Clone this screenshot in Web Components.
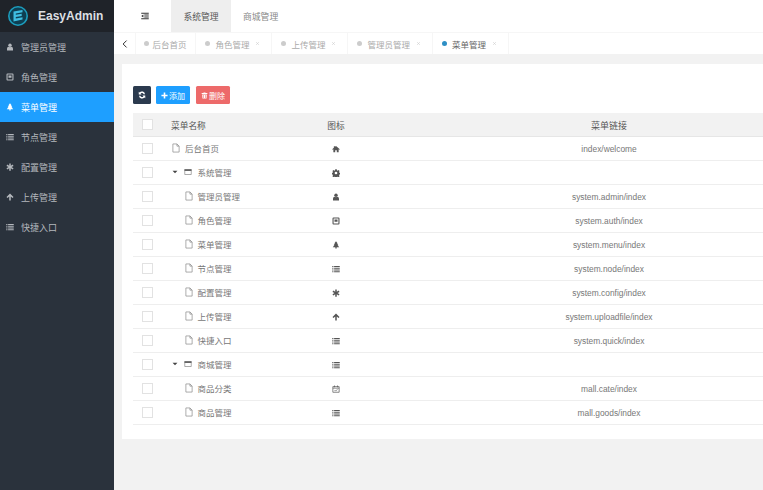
<!DOCTYPE html>
<html lang="zh"><head><meta charset="utf-8">
<style>
html,body{margin:0;padding:0;height:100%;overflow:hidden;background:#f2f2f2;}
body{font:9px "Liberation Sans","Noto Sans CJK SC",sans-serif;color:#666;}
</style></head><body>
<ea-app>
  <ea-sidebar slot="side">
    <ea-nav-item icon="user">管理员管理</ea-nav-item>
    <ea-nav-item icon="role">角色管理</ea-nav-item>
    <ea-nav-item icon="tree" active>菜单管理</ea-nav-item>
    <ea-nav-item icon="list">节点管理</ea-nav-item>
    <ea-nav-item icon="asterisk">配置管理</ea-nav-item>
    <ea-nav-item icon="up">上传管理</ea-nav-item>
    <ea-nav-item icon="list">快捷入口</ea-nav-item>
  </ea-sidebar>
  <ea-topbar slot="top"></ea-topbar>
  <ea-tabs slot="top">
    <ea-tab fixed>后台首页</ea-tab>
    <ea-tab>角色管理</ea-tab>
    <ea-tab>上传管理</ea-tab>
    <ea-tab>管理员管理</ea-tab>
    <ea-tab active>菜单管理</ea-tab>
  </ea-tabs>
  <ea-card>
    <ea-toolbar></ea-toolbar>
    <ea-table>
      <ea-row head name="菜单名称" icon-text="图标" link="菜单链接"></ea-row>
      <ea-row level="0" name="后台首页" icon="home" link="index/welcome"></ea-row>
      <ea-row level="0" folder name="系统管理" icon="cog"></ea-row>
      <ea-row level="1" name="管理员管理" icon="user" link="system.admin/index"></ea-row>
      <ea-row level="1" name="角色管理" icon="role" link="system.auth/index"></ea-row>
      <ea-row level="1" name="菜单管理" icon="tree" link="system.menu/index"></ea-row>
      <ea-row level="1" name="节点管理" icon="list" link="system.node/index"></ea-row>
      <ea-row level="1" name="配置管理" icon="asterisk" link="system.config/index"></ea-row>
      <ea-row level="1" name="上传管理" icon="up" link="system.uploadfile/index"></ea-row>
      <ea-row level="1" name="快捷入口" icon="list" link="system.quick/index"></ea-row>
      <ea-row level="0" folder name="商城管理" icon="list"></ea-row>
      <ea-row level="1" name="商品分类" icon="calendar" link="mall.cate/index"></ea-row>
      <ea-row level="1" name="商品管理" icon="list" link="mall.goods/index"></ea-row>
    </ea-table>
  </ea-card>
</ea-app>
<script>
const PATHS={
 user:'<circle cx="8" cy="4.6" r="3.4"/><path d="M2 14.800v-2.800c0-2.600 1.500-4.200 3.300-4.300.7.600 1.700 1 2.700 1s2-.4 2.700-1c1.800.1 3.300 1.700 3.300 4.300v2.800z"/>',
 role:'<path fill-rule="evenodd" d="M3 1h10a2 2 0 0 1 2 2v10a2 2 0 0 1-2 2H3a2 2 0 0 1-2-2V3a2 2 0 0 1 2-2zM3.200 3.200v9.600h9.600V3.200z"/><path d="M5 5h6v4.500H5z"/>',
 tree:'<path d="M8 .5l3.500 4.300H9.900l3 3.600h-1.700l3.300 4H9.300V15H6.700v-2.600H1.500l3.300-4H3.100l3-3.600H4.500z"/>',
 list:'<path d="M.5 1.800h2.400v2.300H.5zM4.200 1.800h11.300v2.300H4.200zM.5 5.300h2.400v2.300H.5zM4.200 5.300h11.300v2.300H4.200zM.5 8.800h2.400v2.300H.5zM4.200 8.800h11.300v2.300H4.200zM.5 12.300h2.400v2.300H.5zM4.200 12.300h11.300v2.300H4.200z"/>',
 asterisk:'<path d="M6.500.8h3v4.700l4-2.300 1.500 2.600L11 8.100l4 2.300-1.500 2.600-4-2.300v4.700h-3v-4.700l-4 2.300L1 10.400l4-2.300-4-2.300 1.500-2.600 4 2.300z"/>',
 up:'<path d="M8 1.200l7 7-2 2-3.500-3.400V15h-3V6.800L3 10.200l-2-2z"/>',
 home:'<path d="M8 1.800l7.600 6.500-1 1.100L13.300 8.300V14.500H9.600v-4H6.400v4H2.700V8.300L1.400 9.400l-1-1.100L3.700 5.500V2.500h2.200v1.200z"/>',
 cog:'<path fill-rule="evenodd" d="M6.500.6h3l.4 2.100 1.400.6 1.800-1.200 2.100 2.100-1.200 1.800.6 1.400 2 .4v3l-2 .4-.6 1.400 1.200 1.800-2.100 2.100-1.800-1.200-1.400.6-.4 2h-3l-.4-2-1.400-.6-1.800 1.200-2.100-2.100 1.200-1.800-.6-1.400-2-.4v-3l2-.4.6-1.400-1.200-1.800L3 2.100l1.800 1.200 1.400-.6zM8 5.300a2.700 2.700 0 1 0 0 5.400 2.700 2.700 0 0 0 0-5.400z"/>',
 calendar:'<path fill="none" stroke="currentColor" stroke-width="1.400" d="M1.700 3.200h12.600v11.300H1.700zM1.700 6.300h12.600M5 1v3.500M11 1v3.500"/><path fill="none" stroke="currentColor" stroke-width="1.400" d="M5.200 10.200l2 2 3.600-3.600"/>',
 refresh:'<path d="M14 6.600h-2.700A3.600 3.600 0 0 0 5.300 5.100l1.900 1.900H1.500V1.300l1.700 1.700A6.200 6.200 0 0 1 14 6.600zM2 9.400h2.700a3.600 3.600 0 0 0 6 1.500L8.800 9h5.700v5.700l-1.700-1.700A6.200 6.200 0 0 1 2 9.400z"/>',
 plus:'<path d="M6.200 1h3.600v5.200H15v3.600H9.800V15H6.200V9.800H1V6.200h5.200z"/>',
 trash:'<path d="M6 1h4l.6 1.500H14.500v2h-13v-2h3.900zM2.700 5.500h10.600l-.7 9.500H3.400zM5.500 7v6.500h1.200V7zm3.800 0v6.500h1.200V7z"/>',
 outdent:'<path d="M.5 1.500h15v2H.5zM6.500 5.200h9v2h-9zM6.500 8.900h9v2h-9zM.5 12.500h15v2H.5zM4.800 5v6L.5 8z"/>',
 back:'<path d="M10.500 2.500L5 8l5.500 5.500" fill="none" stroke="currentColor" stroke-width="1.600"/>',
 file:'<path fill="none" stroke="currentColor" stroke-width="1.100" d="M3 1.500h6.500L13 5v9.500H3zM9.500 1.500V5H13"/>',
 win:'<path d="M1 2.500h14v3.500H1z"/><path fill="none" stroke="currentColor" stroke-width="1.100" d="M1.500 3h13v10h-13z"/>',
 caret:'<path d="M1.500 4.500h13L8 11.500z"/>',
 x:'<path d="M3.500 3.500l9 9M12.500 3.500l-9 9" fill="none" stroke="currentColor" stroke-width="1.800"/>'
};
function def(name,css,html){
  customElements.define(name,class extends HTMLElement{
    connectedCallback(){
      if(this.shadowRoot)return;
      const r=this.attachShadow({mode:'open'});
      r.innerHTML='<style>'+css+'</style>'+(typeof html==='function'?html(this):html);
    }
  });
}
def('ea-icon',':host{display:inline-flex;flex:none;width:var(--s,9px);height:var(--s,9px);color:inherit}svg{width:100%;height:100%;fill:currentColor;display:block}',
  h=>'<svg viewBox="0 0 16 16" aria-hidden="true">'+(PATHS[h.getAttribute('name')]||'')+'</svg>');
def('ea-app',`:host{display:flex;height:490px;width:763px;overflow:hidden;background:#f2f2f2}
  .main{flex:1;min-width:0;display:flex;flex-direction:column}
  .body{padding:10px 0 0 8px}`,
  `<slot name="side"></slot><div class="main"><slot name="top"></slot><div class="body"><slot></slot></div></div>`);
def('ea-sidebar',`:host{display:flex;flex-direction:column;width:114px;flex:none;height:100%;background:#2a323c}
  .logo{height:32px;background:#1f2329;display:flex;align-items:center;gap:10px;padding-left:8px;color:#dcdfe2;font:bold 12px "Liberation Sans",sans-serif}
  svg{width:20px;height:20px;display:block;flex:none}`,
  `<div class="logo"><svg viewBox="0 0 20 20"><circle cx="10" cy="10" r="9.200" fill="#0e3f52" stroke="#1c9dbd" stroke-width="1.600"/><path d="M5.500 5.500L14.500 4v2.300L7.800 7.400v1.300l5.900-1v2.300l-5.900 1v1.400l6.700-1.100v2.300L5.500 15.500z" fill="#3fbde0"/></svg><span>EasyAdmin</span></div><slot></slot>`);
def('ea-nav-item',`:host{display:flex;align-items:center;height:30px;padding-left:6px;gap:7px;font-size:9px;color:#b4b8bd}
  :host([active]){background:#1e9fff;color:#fff}
  ea-icon{--s:8px}`,
  h=>`<ea-icon name="${h.getAttribute('icon')}"></ea-icon><span><slot></slot></span>`);
def('ea-topbar',`:host{display:flex;height:32px;background:#fff;align-items:stretch;font-size:8.800px;color:#666;flex:none}
  .fold{width:57px;box-sizing:border-box;padding-left:5px;display:flex;align-items:center;justify-content:center;color:#333;--s:8px}
  .t{display:flex;align-items:center;padding:0 12px;color:#888}
  .t.on{background:#eee;color:#555;width:36px;justify-content:center}`,
  `<div class="fold"><ea-icon name="outdent"></ea-icon></div><div class="t on">系统管理</div><div class="t">商城管理</div>`);
def('ea-tabs',`:host{display:flex;height:22px;box-sizing:border-box;background:#fff;align-items:center;border-top:1px solid #f6f6f6;flex:none}
  .back{width:22px;display:flex;justify-content:center;color:#333;--s:10px;height:100%;align-items:center;box-sizing:border-box;border-right:1px solid #f6f6f6}`,
  `<div class="back"><ea-icon name="back"></ea-icon></div><slot></slot>`);
def('ea-tab',`:host{display:flex;align-items:center;height:100%;box-sizing:border-box;padding:0 11px 0 9px;color:#aaa;font-size:8.500px;border-right:1px solid #f6f6f6;white-space:nowrap;flex:none}
  .d{width:5px;height:5px;border-radius:50%;background:#ccc;margin-right:5.500px}
  :host([fixed]) .d{margin-right:3.500px}
  :host([fixed]){width:60px;padding:0 0 0 8px}
  :host([active]) .d{background:#2e8fc5}
  :host([active]){color:#666}
  .x{--s:5px;color:#ccc;margin-left:5.500px}`,
  h=>`<span class="d"></span><span><slot></slot></span>`+(h.hasAttribute('fixed')?'':'<ea-icon class="x" name="x"></ea-icon>'));
def('ea-card',`:host{display:block;background:#fff;height:375px;width:641px;box-sizing:border-box;padding:22px 0 0 11px;overflow:hidden}`,`<slot></slot>`);
def('ea-toolbar',`:host{display:flex;gap:6px;height:18px;margin-bottom:9px;font-size:8px;color:#fff;--s:7px}
  .b{display:flex;align-items:center;justify-content:center;border-radius:1.500px;gap:1px;height:18px}
  .r{width:18px;background:#2b3a4e;margin-right:-1px;--s:8px}.a{width:34px;background:#1e9fff}.d{width:34px;background:#ed6a6a}`,
  `<div class="b r"><ea-icon name="refresh"></ea-icon></div><div class="b a"><ea-icon name="plus"></ea-icon>添加</div><div class="b d"><ea-icon name="trash"></ea-icon>删除</div>`);
def('ea-table',`:host{display:block;width:723px}`,`<slot></slot>`);
def('ea-row',`:host{display:grid;grid-template-columns:28px 149px 52px 494px;height:24px;box-sizing:border-box;border-bottom:1px solid #eee;align-items:center;color:#777;font-size:8.500px}
  :host([head]){background:#f2f2f2;color:#555;border-bottom-color:#e6e6e6;font-size:8.700px}
  .c{display:flex;justify-content:center;padding-left:1px}
  .box{width:11px;height:11px;border:1px solid #e2e2e2;background:#fff;box-sizing:border-box}
  .n{display:flex;align-items:center;padding-bottom:2px}
  .n ea-icon{margin-top:1px}
  :host([head]) .n,:host([head]) .l,:host([head]) .i{padding:2px 0 0}
  .i{display:flex;justify-content:center;color:#555;--s:8px}
  .l{text-align:center;font-size:8.400px}
  :host([head]) .l{font-size:9px}
  .f{--s:10px;color:#888;margin-right:4px}.w{--s:8px;color:#666;margin-right:5.500px}.k{--s:6px;color:#444;margin-right:6px}`,
  h=>{
    const lv=+(h.getAttribute('level')||0),fo=h.hasAttribute('folder'),hd=h.hasAttribute('head');
    const pad=hd?10:fo?11:(lv?22.5:10);
    const pre=hd?'':(fo?'<ea-icon class="k" name="caret"></ea-icon><ea-icon class="w" name="win"></ea-icon>':'<ea-icon class="f" name="file"></ea-icon>');
    const ic=h.getAttribute('icon')?`<ea-icon name="${h.getAttribute('icon')}"></ea-icon>`:(h.getAttribute('icon-text')||'');
    return `<div class="c"><span class="box"></span></div><div class="n" style="padding-left:${pad}px">${pre}<span>${h.getAttribute('name')}</span></div><div class="i">${ic}</div><div class="l">${h.getAttribute('link')||''}</div>`;
  });
</script>
</body></html>
